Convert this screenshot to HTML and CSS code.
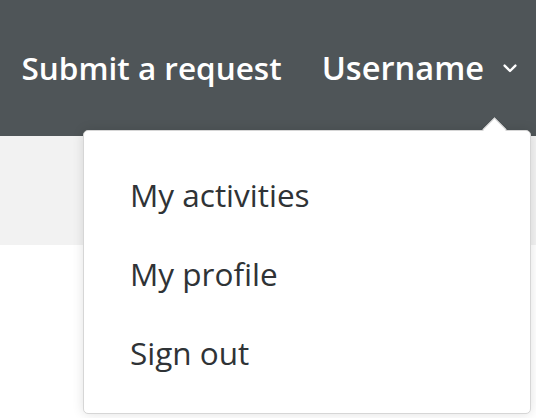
FILE: index.html
```html
<!DOCTYPE html>
<html>
<head>
<meta charset="utf-8">
<link rel="stylesheet" href="styles.css">
</head>
<body>
<header class="header">
  <nav class="nav">
    <a class="nav-link" href="#">Submit a request</a>
    <div class="user">
      <button class="user-btn">Username
        <svg class="chev" width="14" height="9" viewBox="0 0 14 9"><path d="M1.6 1.6 L7 7 L12.4 1.6" fill="none" stroke="#fff" stroke-width="2.4" stroke-linecap="round" stroke-linejoin="round"/></svg>
      </button>
      <div class="menu">
        <a class="menu-item" href="#">My activities</a>
        <a class="menu-item" href="#">My profile</a>
        <a class="menu-item" href="#">Sign out</a>
      </div>
    </div>
  </nav>
</header>
<div class="band"></div>
</body>
</html>
```
FILE: styles.css
```css
html, body {
  margin: 0;
  padding: 0;
  background: #fff;
  font-family: "Open Sans", "Liberation Sans", sans-serif;
}
body {
  min-height: 100vh;
}
.header {
  height: 136px;
  background: #4f5558;
  display: flex;
  align-items: center;
  justify-content: flex-end;
}
.nav {
  display: flex;
  align-items: center;
  gap: 40px;
  padding-right: 19px;
  margin-top: -1px;
}
.nav-link {
  color: #fff;
  text-decoration: none;
  font-size: 31.5px;
  font-weight: 600;
}
.user {
  position: relative;
}
.user-btn {
  background: none;
  border: 0;
  padding: 0;
  color: #fff;
  font-family: inherit;
  font-size: 32.6px;
  font-weight: 600;
  display: flex;
  align-items: center;
  gap: 19px;
}
.chev { display: block; margin-top: 2px; }
.menu {
  position: absolute;
  top: 85px;
  right: -14px;
  width: 448px;
  height: 284px;
  background: #fff;
  border: 1px solid #d6d6d6;
  border-radius: 5px;
  box-shadow: 0 0 12px rgba(0,0,0,0.12);
  padding-top: 24px;
  box-sizing: border-box;
  display: flex;
  flex-direction: column;
  z-index: 10;
}
.menu::before {
  content: "";
  position: absolute;
  top: -10.5px;
  right: 27.5px;
  width: 17px;
  height: 17px;
  background: #fff;
  border-left: 1px solid #d6d6d6;
  border-top: 1px solid #d6d6d6;
  box-sizing: border-box;
  transform: rotate(45deg);
}
.menu-item {
  position: relative;
  display: block;
  color: #2f3336;
  text-decoration: none;
  font-size: 31.5px;
  line-height: 79px;
  padding-left: 46px;
}
.band {
  height: 109px;
  background: #f2f2f2;
}
```
